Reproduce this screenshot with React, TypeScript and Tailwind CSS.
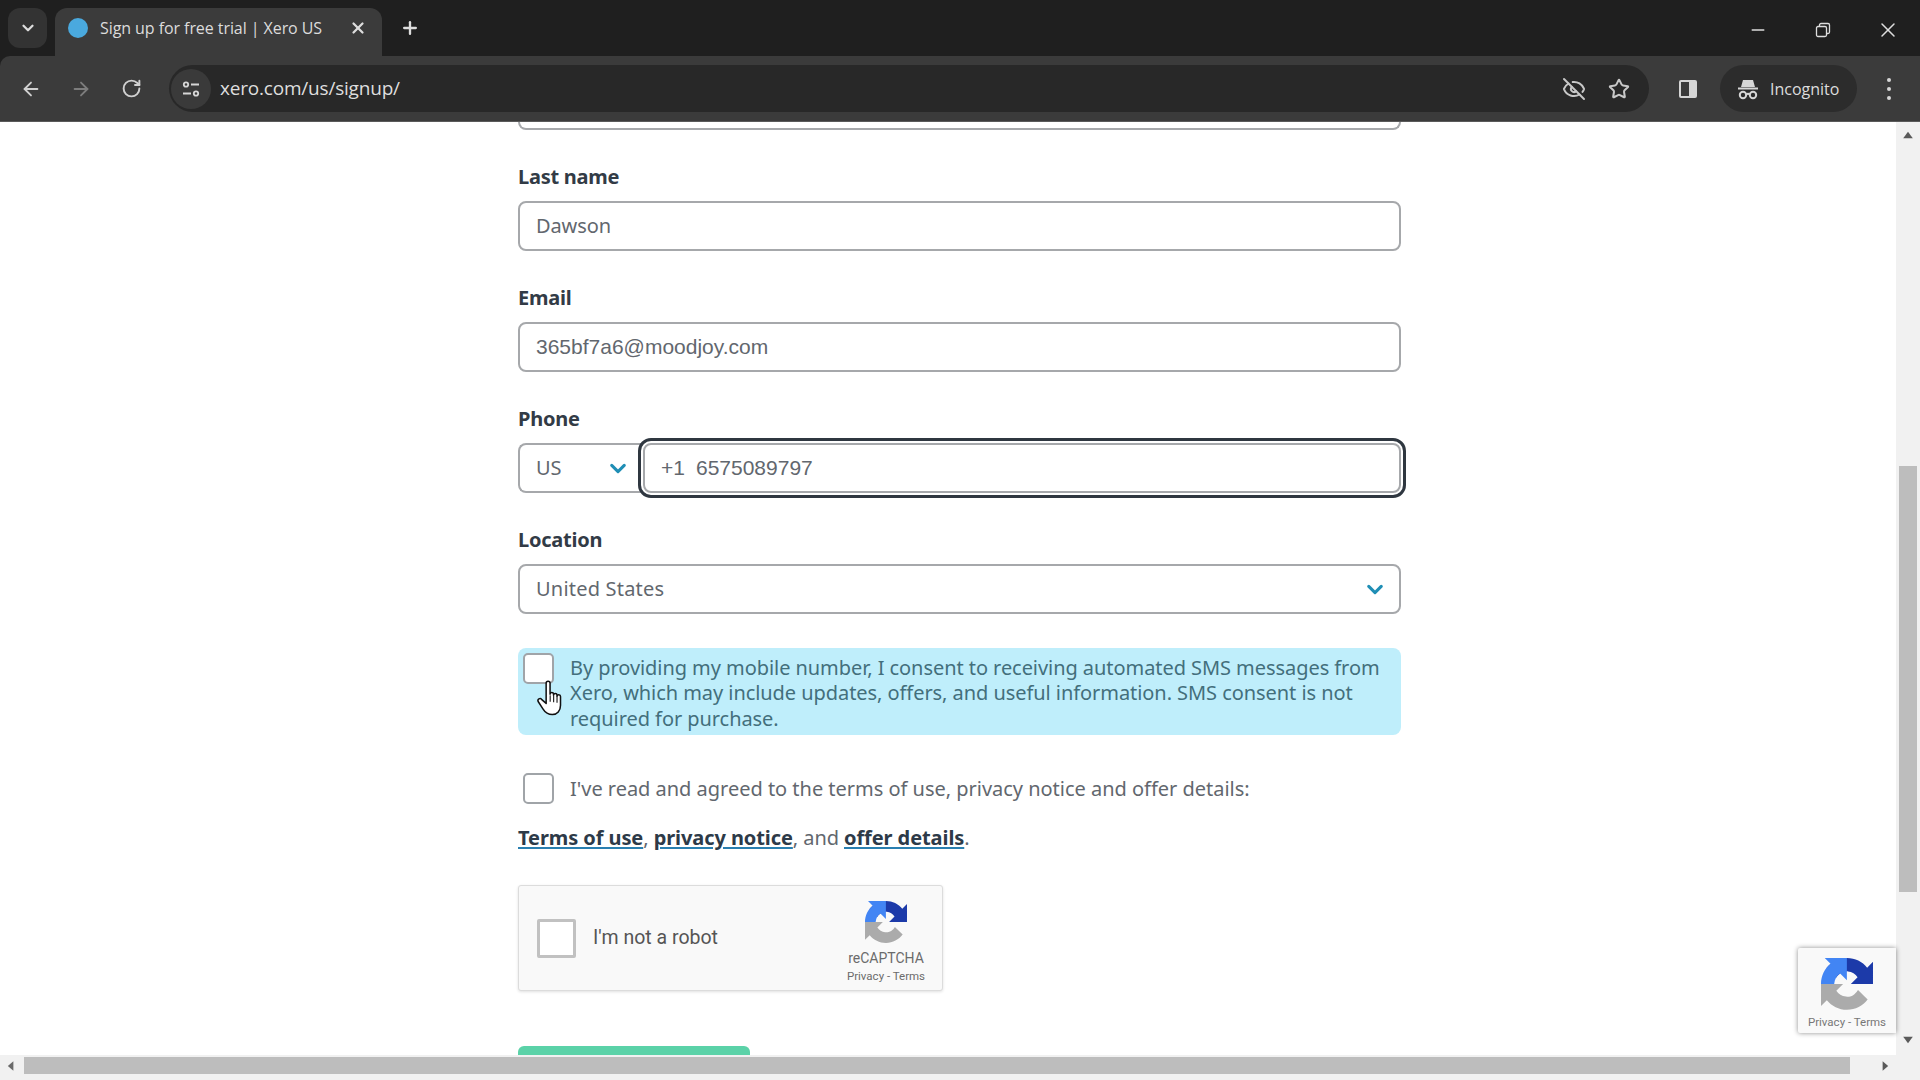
import { ArrowLeft, ArrowRight, RotateCw, EyeOff, Star, X, Plus, ChevronDown, Minus } from "lucide-react";

const body = "[font-family:'Noto_Sans',sans-serif]";

function Field({ label, children }: { label: string; children: React.ReactNode }) {
  return (
    <div className="mt-[34px]">
      <div className="h-[26px] mb-[11px] text-[20px] leading-[26px] font-bold tracking-[-0.25px] text-[#323b46]">{label}</div>
      {children}
    </div>
  );
}

function Chevron({ className }: { className: string }) {
  return (
    <svg viewBox="0 0 18 12" className={className} fill="none" stroke="#1f8eb5" strokeWidth="3.4" strokeLinecap="round" strokeLinejoin="round">
      <path d="M2 2.500 9 9.500 16 2.500" />
    </svg>
  );
}

function Recaptcha({ className }: { className: string }) {
  return (
    <svg viewBox="0 0 64 64" className={className}>
      <path d="M64 31.955l-.033-1.37V4.687l-7.16 7.16C50.948 4.674 42.033.093 32.05.093c-10.4 0-19.622 4.96-25.458 12.64l11.736 11.86a15.55 15.55 0 0 1 4.754-5.334c2.05-1.6 4.952-2.906 8.968-2.906.485 0 .86.057 1.135.163 4.976.393 9.288 3.14 11.828 7.124l-8.307 8.307 32.294.008" fill="#1c3aa9" />
      <path d="M31.862.001l-1.37.033H4.594l7.16 7.16C4.58 13.053 0 21.968 0 31.95v.003h16.26c0-.485.057-.86.163-1.135.393-4.976 3.14-9.288 7.124-11.828l8.307 8.307L31.862.001" fill="#4285f4" />
      <path d="M.001 31.953l.033 1.37v25.898l7.16-7.16c5.86 7.173 14.775 11.754 24.757 11.754 10.4 0 19.622-4.96 25.458-12.64l-11.86-11.736a15.55 15.55 0 0 1-4.754 5.334c-2.05 1.6-4.952 2.906-8.968 2.906-.485 0-.86-.057-1.135-.163-4.976-.393-9.288-3.14-11.828-7.124l8.307-8.307L.001 31.953" fill="#ababab" />
    </svg>
  );
}

export default function App() {
  return (
    <div className="relative w-[1920px] h-[1080px] overflow-hidden bg-white flex flex-col">
      {/* Tab strip */}
      <div className="h-[56px] shrink-0 bg-[#1f1f1f] flex items-end pl-[8px] [font-family:'Open_Sans',sans-serif]">
        <div className="self-start mt-[8px] w-[39px] h-[40px] rounded-[12px] bg-[#333333] flex items-center justify-center">
          <ChevronDown size={18} strokeWidth={3} className="text-[#dddddd]" />
        </div>
        <div className="ml-[8px] w-[327px] h-[48px] rounded-t-[12px] bg-[#3b3b3b] flex items-center pl-[13px] pb-[8px]">
          <div className="w-[20px] h-[20px] rounded-full bg-[#4aa9de]" />
          <div className="ml-[12px] w-[250px] text-[16px] text-[#dcdcdc] tracking-[-0.07px] whitespace-nowrap">Sign up for free trial | Xero US</div>
          <X size={18} strokeWidth={3} className="ml-[-1px] text-[#dddddd]" />
        </div>
        <div className="self-start mt-[18px] ml-[18px]">
          <Plus size={20} strokeWidth={2.8} className="text-[#dddddd]" />
        </div>
        <div className="flex-1" />
        <div className="self-start mt-[18px] flex items-center">
          <Minus size={20} strokeWidth={1.6} className="text-[#dddddd]" />
          <svg viewBox="0 0 16 16" className="w-[16px] h-[16px] ml-[47px]" fill="none" stroke="#dddddd" strokeWidth="1.3">
            <rect x="1.500" y="4.500" width="10" height="10" rx="1.500" />
            <path d="M4.500 4.500V3a1.500 1.500 0 0 1 1.500-1.500h7A1.500 1.500 0 0 1 14.500 3v7a1.500 1.500 0 0 1-1.500 1.500h-1.500" />
          </svg>
          <X size={24} strokeWidth={1.5} className="ml-[45px] mr-[20px] text-[#dddddd]" />
        </div>
      </div>

      {/* Toolbar */}
      <div className="h-[66px] shrink-0 bg-[#1f1f1f]">
        <div className="h-full bg-[#3b3b3b] rounded-tl-[10px] flex items-center pl-[20px] [font-family:'Open_Sans',sans-serif] border-b border-[#5a5a5a]">
          <ArrowLeft size={22} strokeWidth={2} className="text-[#d0d0d0]" />
          <ArrowRight size={22} strokeWidth={2} className="ml-[28px] text-[#7d7d7d]" />
          <RotateCw size={21} strokeWidth={2.2} className="ml-[29px] text-[#d0d0d0]" />
          <div className="ml-[27px] w-[1480px] h-[47px] rounded-full bg-[#282828] flex items-center pl-[2px]">
            <div className="w-[40px] h-[40px] rounded-full bg-[#3a3a3a] flex items-center justify-center">
              <svg viewBox="0 0 20 20" className="w-[20px] h-[20px]" fill="none" stroke="#d6d6d6" strokeWidth="1.8">
                <circle cx="5" cy="5.500" r="2.200" />
                <path d="M10 5.500h8M2 14.500h8" />
                <circle cx="15" cy="14.500" r="2.200" />
              </svg>
            </div>
            <div className="ml-[9px] text-[19px] text-[#dedede] tracking-[-0.2px]">xero.com/us/signup/</div>
            <div className="flex-1" />
            <EyeOff size={24} strokeWidth={2} className="text-[#c8c8c8]" />
            <Star size={22} strokeWidth={2.2} className="ml-[22px] mr-[19px] text-[#c8c8c8]" />
          </div>
          <svg viewBox="0 0 20 20" className="ml-[29px] w-[20px] h-[20px]">
            <rect x="1" y="1" width="18" height="18" rx="2" fill="#d6d6d6" />
            <rect x="3" y="3" width="8" height="14" fill="#3b3b3b" />
          </svg>
          <div className="ml-[22px] w-[137px] h-[47px] rounded-full bg-[#2c2c2c] flex items-center pl-[16px]">
            <svg viewBox="0 0 24 24" className="w-[24px] h-[24px]" fill="none" stroke="#d6d6d6" strokeWidth="2">
              <path d="M7 3h10l2 7H5z" fill="#d6d6d6" stroke="none" />
              <path d="M2 11.500h20" />
              <circle cx="7" cy="18" r="3.200" />
              <circle cx="17" cy="18" r="3.200" />
              <path d="M10.200 17.500c1-.8 2.600-.8 3.600 0" />
            </svg>
            <div className="ml-[10px] text-[16px] text-[#dcdcdc]">Incognito</div>
          </div>
          <div className="ml-[30px] flex flex-col gap-[5px]">
            <div className="w-[4px] h-[4px] rounded-full bg-[#d6d6d6]" />
            <div className="w-[4px] h-[4px] rounded-full bg-[#d6d6d6]" />
            <div className="w-[4px] h-[4px] rounded-full bg-[#d6d6d6]" />
          </div>
        </div>
      </div>

      {/* Viewport */}
      <div className="flex-1 flex min-h-0">
        <div className="flex-1 flex flex-col min-w-0">
          <div className={`flex-1 overflow-hidden pl-[518px] ${body}`}>
            <div className="w-[883px]">
              <div className="h-[8px] border-[#a6a8ab] border-x-2 border-b-2 rounded-b-[8px]" />
              <Field label="Last name">
                <div className="h-[50px] border-2 border-[#a6a8ab] rounded-[8px] flex items-center pl-[16px] text-[20px] tracking-[-0.1px] text-[#62676e]">Dawson</div>
              </Field>
              <Field label="Email">
                <div className="h-[50px] border-2 border-[#a6a8ab] rounded-[8px] flex items-center pl-[16px] text-[21px] text-[#62676e] [font-family:'Liberation_Sans',sans-serif]">365bf7a6@moodjoy.com</div>
              </Field>
              <Field label="Phone">
                <div className="flex h-[50px]">
                  <div className="w-[125px] border-2 border-r-0 border-[#a6a8ab] rounded-l-[8px] flex items-center pl-[16px] text-[20px] text-[#62676e]">
                    US
                    <Chevron className="ml-auto mr-[17px] w-[16px] h-[11px]" />
                  </div>
                  <div className="flex-1 border-2 border-[#a6a8ab] rounded-[8px] flex items-center pl-[16px] text-[21px] text-[#62676e] outline-[3px] outline-[#2f3740] outline-offset-[2px] [font-family:'Liberation_Sans',sans-serif]">
                    <span>+1</span>
                    <span className="ml-[11px]">6575089797</span>
                  </div>
                </div>
              </Field>
              <Field label="Location">
                <div className="h-[50px] border-2 border-[#a6a8ab] rounded-[8px] flex items-center pl-[16px] pr-[16px] text-[20px] tracking-[0.2px] text-[#62676e]">
                  United States
                  <Chevron className="ml-auto w-[16px] h-[11px]" />
                </div>
              </Field>
              <div className="mt-[34px] h-[87px] rounded-[8px] bg-[#bfeefb] flex items-start pl-[5px] pt-[5px]">
                <div className="w-[31px] h-[31px] shrink-0 rounded-[5px] border-2 border-[#a0a4a8] bg-white" />
                <div className="ml-[16px] pt-[2px] w-[830px] text-[20px] leading-[25.3px] tracking-[-0.06px] text-[#436f7c]">
                  By providing my mobile number, I consent to receiving automated SMS messages from Xero, which may include updates, offers, and useful information. SMS consent is not required for purchase.
                </div>
              </div>
              <div className="mt-[38px] flex items-center pl-[5px] h-[31px]">
                <div className="w-[31px] h-[31px] rounded-[5px] border-2 border-[#a0a4a8] bg-white" />
                <div className="ml-[16px] text-[20px] tracking-[-0.02px] text-[#62676e]">I've read and agreed to the terms of use, privacy notice and offer details:</div>
              </div>
              <div className="mt-[21px] h-[25px] text-[20px] leading-[25px] tracking-[-0.08px] text-[#62676e]">
                <a className="font-bold text-[#2d3a48] underline decoration-[#2a7fb0] decoration-2 underline-offset-2">Terms of use</a>,{" "}
                <a className="font-bold text-[#2d3a48] underline decoration-[#2a7fb0] decoration-2 underline-offset-2">privacy notice</a>, and{" "}
                <a className="font-bold text-[#2d3a48] underline decoration-[#2a7fb0] decoration-2 underline-offset-2">offer details</a>.
              </div>
              <div className="mt-[35px] w-[425px] h-[106px] bg-[#f9f9f9] border border-[#dcdcdc] rounded-[3px] shadow-[0_1px_3px_rgba(0,0,0,0.12)] flex items-center pl-[18px] [font-family:Roboto,sans-serif]">
                <div className="w-[39px] h-[39px] bg-white border-[3px] border-[#c1c1c1] rounded-[2px]" />
                <div className="ml-[17px] text-[19.5px] text-[#555555]">I'm not a robot</div>
                <div className="ml-auto mr-[15px] self-start mt-[15px] w-[82px] flex flex-col items-center">
                  <Recaptcha className="w-[42px] h-[42px]" />
                  <div className="mt-[7px] text-[14px] leading-[16px] text-[#6b6b6b]">reCAPTCHA</div>
                  <div className="mt-[3px] text-[11.5px] leading-[15px] text-[#6b6b6b] whitespace-nowrap">Privacy - Terms</div>
                </div>
              </div>
              <div className="mt-[55px] w-[232px] h-[40px] rounded-t-[6px] bg-[#5bd2a8]" />
            </div>
          </div>
          {/* Horizontal scrollbar */}
          <div className="h-[25px] shrink-0 bg-[#f1f1f1] flex items-start pt-[2px]">
            <svg viewBox="0 0 10 14" className="ml-[7px] mt-[2px] w-[8px] h-[14px]"><path d="M8 1 1 7l7 6z" fill="#6a6a6a" /></svg>
            <div className="ml-[9px] w-[1826px] h-[17px] bg-[#bdbdbd]" />
            <svg viewBox="0 0 10 14" className="ml-auto mr-[7px] mt-[2px] w-[8px] h-[14px]"><path d="M2 1l7 6-7 6z" fill="#5a5a5a" /></svg>
          </div>
        </div>
        {/* Vertical scrollbar */}
        <div className="w-[24px] shrink-0 bg-[#f1f1f1] flex flex-col items-center">
          <svg viewBox="0 0 14 10" className="mt-[9px] w-[14px] h-[8px]"><path d="M1 9 7 1l6 8z" fill="#5a5a5a" /></svg>
          <div className="mt-[327px] w-[18px] h-[426px] bg-[#bdbdbd]" />
          <svg viewBox="0 0 14 10" className="mt-[144px] w-[14px] h-[8px]"><path d="M1 1l6 8 6-8z" fill="#5a5a5a" /></svg>
        </div>
      </div>

      {/* reCAPTCHA badge */}
      <div className="absolute left-[1798px] top-[948px] w-[98px] h-[85px] bg-[#f9f9f9] rounded-l-[2px] shadow-[0_0_5px_rgba(0,0,0,0.45)] flex flex-col items-center pt-[10px] [font-family:Roboto,sans-serif]">
        <Recaptcha className="w-[52px] h-[52px]" />
        <div className="mt-[5px] text-[11.5px] leading-[15px] text-[#777777] whitespace-nowrap">Privacy - Terms</div>
      </div>

      {/* Pointer cursor */}
      <svg viewBox="0 0 26 34" className="absolute left-[536px] top-[680px] w-[29px] h-[37px]" fill="#ffffff" stroke="#111111" strokeWidth="1.4" strokeLinejoin="round">
        <path d="M9 3c0-2.400 3.600-2.400 3.600 0v10c0-2 3.200-2 3.200 0v1c0-2 3.200-2 3.200 0v1c0-2 3.200-2 3.200 .2v8c0 5-3 8.500-7.500 8.500-4 0-6.500-1.700-8.500-5L1.800 20c-1.300-2.300 1.700-4 3.200-2L9 21.500z" />
        <path d="M12.700 14v6M15.900 14.500v6M19 15v6" fill="none" strokeWidth="1" />
      </svg>
    </div>
  );
}
